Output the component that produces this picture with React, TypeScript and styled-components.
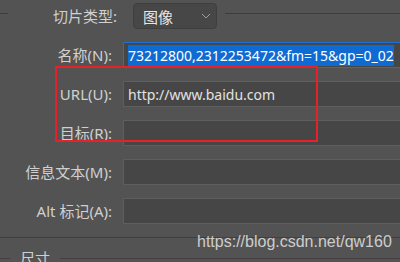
import React from "react";
import styled, { createGlobalStyle } from "styled-components";

const GlobalStyle = createGlobalStyle`
  html, body {
    margin: 0;
    padding: 0;
    background: #535353;
  }
  body {
    font-family: "Noto Sans", "Noto Sans CJK SC", sans-serif;
    overflow: hidden;
  }
`;

const Panel = styled.div`
  position: relative;
  width: 400px;
  height: 262px;
  overflow: hidden;
  background: #535353;
`;

const Form = styled.div`
  display: grid;
  grid-template-columns: 112px 300px;
  column-gap: 11px;
  row-gap: 13px;
  padding-top: 3px;
`;

const LabelCell = styled.div`
  display: flex;
  align-items: center;
  height: 26px;
`;

const Stub = styled.div`
  width: 8px;
  height: 1px;
  background: #3d3d3d;
  margin-top: -6px;
`;

const Label = styled.label<{ $shift?: number }>`
  margin-left: auto;
  margin-right: ${(p) => -(p.$shift || 0)}px;
  font-size: 15px;
  line-height: 26px;
  color: #d0d0d0;
  white-space: nowrap;
`;

const ControlCell = styled.div`
  display: flex;
  align-items: center;
  height: 26px;
`;

const Select = styled.div`
  box-sizing: border-box;
  display: flex;
  align-items: center;
  justify-content: space-between;
  width: 84px;
  height: 26px;
  margin-left: 10px;
  padding: 0 5px 0 9px;
  background: #474747;
  border: 1px solid #3f3f3f;
  border-radius: 4px;
  font-size: 15px;
  color: #e6e6e6;
`;

const Rule = styled.div`
  flex: 1;
  height: 1px;
  background: #3d3d3d;
  margin-left: 8px;
  margin-top: -6px;
`;

const Input = styled.div<{ $focused?: boolean }>`
  box-sizing: border-box;
  display: flex;
  align-items: center;
  width: 300px;
  height: 26px;
  padding-left: 4px;
  background: #464646;
  border: 1px solid ${(p) => (p.$focused ? "#1d6fd1" : "#5e5e5e")};
  font-size: 14px;
  color: #e2e2e2;
  white-space: nowrap;
  overflow: hidden;
`;

const Selected = styled.span`
  background: #0f6bd1;
  color: #ffffff;
  line-height: 21px;
`;

const Separator = styled.div`
  height: 1px;
  background: #404040;
  margin-top: 13px;
`;

const Group = styled.div`
  display: flex;
  align-items: center;
  height: 20px;
  margin-top: 10px;
`;

const GroupLine = styled.div<{ $grow?: boolean }>`
  height: 1px;
  background: #404040;
  width: 10px;
  flex: ${(p) => (p.$grow ? 1 : "none")};
`;

const GroupTitle = styled.span`
  font-size: 15px;
  color: #d0d0d0;
  margin: 0 10px;
  line-height: 20px;
`;

const Annotation = styled.div`
  position: absolute;
  left: 55px;
  top: 66px;
  width: 263px;
  height: 76px;
  border: 2px solid #e8202a;
  box-sizing: border-box;
  pointer-events: none;
`;

const Watermark = styled.div`
  position: absolute;
  left: 197px;
  top: 233px;
  font-family: "Liberation Sans", Arial, sans-serif;
  font-size: 16px;
  color: #cdcdcd;
`;

const Chevron = () => (
  <svg width="10" height="6" viewBox="0 0 10 6" fill="none">
    <path d="M1 1l4 4 4-4" stroke="#9c9c9c" strokeWidth="1" />
  </svg>
);

const rows = [
  { label: "URL(U):", value: "http://www.baidu.com" },
  { label: "目标(R):", value: "" },
  { label: "信息文本(M):", value: "" },
  { label: "Alt 标记(A):", value: "" },
];

export default function App() {
  return (
    <Panel>
      <GlobalStyle />
      <Form>
        <LabelCell>
          <Stub />
          <Label $shift={5}>切片类型:</Label>
        </LabelCell>
        <ControlCell>
          <Select>
            <span>图像</span>
            <Chevron />
          </Select>
          <Rule />
        </ControlCell>

        <LabelCell>
          <Label>名称(N):</Label>
        </LabelCell>
        <ControlCell>
          <Input $focused>
            <Selected>73212800,2312253472&amp;fm=15&amp;gp=0_02</Selected>
          </Input>
        </ControlCell>

        {rows.map((r) => (
          <React.Fragment key={r.label}>
            <LabelCell>
              <Label>{r.label}</Label>
            </LabelCell>
            <ControlCell>
              <Input>{r.value}</Input>
            </ControlCell>
          </React.Fragment>
        ))}
      </Form>
      <Separator />
      <Group>
        <GroupLine />
        <GroupTitle>尺寸</GroupTitle>
        <GroupLine $grow />
      </Group>
      <Annotation />
      <Watermark>https://blog.csdn.net/qw160</Watermark>
    </Panel>
  );
}
